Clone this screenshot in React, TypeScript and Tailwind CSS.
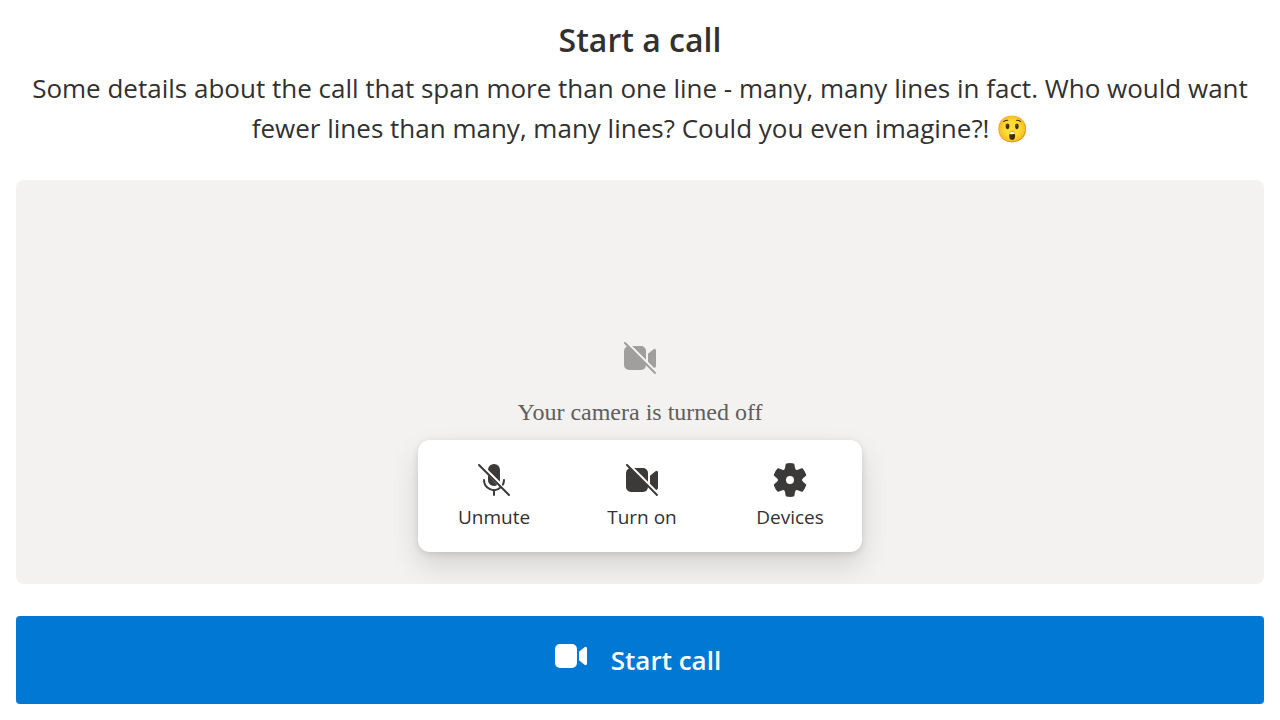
import type { ReactNode } from 'react';

function Icon({ className, children }: { className: string; children: ReactNode }) {
  return (
    <svg viewBox="0 0 20 20" fill="currentColor" aria-hidden="true" className={className}>
      {children}
    </svg>
  );
}

function VideoIcon({ className }: { className: string }) {
  return (
    <Icon className={className}>
      <path d="M13 6.5A2.5 2.5 0 0 0 10.5 4h-6A2.5 2.5 0 0 0 2 6.5v7A2.5 2.5 0 0 0 4.5 16h6a2.5 2.5 0 0 0 2.5-2.5v-7Zm1 1.43v4.15l2.76 2.35a.75.75 0 0 0 1.24-.57V6.14a.75.75 0 0 0-1.24-.57L14 7.93Z" />
    </Icon>
  );
}

function VideoOffIcon({ className }: { className: string }) {
  return (
    <Icon className={className}>
      <path d="M2.85 2.15a.5.5 0 1 0-.7.7l1.27 1.4A2.5 2.5 0 0 0 2 6.5v7A2.5 2.5 0 0 0 4.5 16h6a2.5 2.5 0 0 0 2.45-2.34l4.2 4.2a.5.5 0 0 0 .7-.71l-15-15Z" />
      <path d="M13 6.5v4.38L6.12 4h4.38A2.5 2.5 0 0 1 13 6.5Z" />
      <path d="M14 7.93v3.95l3.1 3.1c.5.0.9-.5.9-1.12V6.14a.75.75 0 0 0-1.24-.57L14 7.93Z" />
    </Icon>
  );
}

function MicOffIcon({ className }: { className: string }) {
  return (
    <Icon className={className}>
      <path d="M7 7.5V10a3 3 0 0 0 4.6 2.54L7 7.5Z" />
      <path d="M13 10V5a3 3 0 0 0-6-.12l5.88 5.88c.08-.25.12-.5.12-.76Z" />
      <path
        d="M2.5 2.5l15 15M5 10a5 5 0 0 0 8.4 3.67M15 10a5 5 0 0 1-.55 2.3M10 15v2.5"
        fill="none"
        stroke="currentColor"
        strokeLinecap="round"
      />
    </Icon>
  );
}

function SettingsIcon({ className }: { className: string }) {
  return (
    <Icon className={className}>
      <path d="M1.91 7.38A8.5 8.5 0 0 1 3.7 4.3a.5.5 0 0 1 .54-.13l1.92.68a1 1 0 0 0 1.32-.76l.36-2a.5.5 0 0 1 .4-.4 8.53 8.53 0 0 1 3.55 0c.2.04.35.2.38.4l.37 2a1 1 0 0 0 1.32.76l1.92-.68a.5.5 0 0 1 .54.13 8.5 8.5 0 0 1 1.78 3.08.5.5 0 0 1-.15.54l-1.56 1.32a1 1 0 0 0 0 1.52l1.56 1.32a.5.5 0 0 1 .15.54 8.5 8.5 0 0 1-1.78 3.08.5.5 0 0 1-.54.13l-1.92-.68a1 1 0 0 0-1.32.76l-.37 2a.5.5 0 0 1-.38.4 8.53 8.53 0 0 1-3.56 0 .5.5 0 0 1-.39-.4l-.36-2a1 1 0 0 0-1.32-.76l-1.92.68a.5.5 0 0 1-.54-.13 8.5 8.5 0 0 1-1.78-3.08.5.5 0 0 1 .15-.54l1.56-1.32a1 1 0 0 0 0-1.52L2.06 7.92a.5.5 0 0 1-.15-.54ZM8 10a2 2 0 1 0 4 0 2 2 0 0 0-4 0Z" />
    </Icon>
  );
}

const controls = [
  { label: 'Unmute', Glyph: MicOffIcon },
  { label: 'Turn on', Glyph: VideoOffIcon },
  { label: 'Devices', Glyph: SettingsIcon },
];

export default function App() {
  return (
    <main className="flex min-h-screen flex-col bg-white p-4 font-['Segoe_UI','Open_Sans',sans-serif] text-[#323130]">
      <header className="text-center">
        <h1 className="text-[32px] leading-12 font-semibold">Start a call</h1>
        <p className="mt-1 text-[26px] leading-10">
          Some details about the call that span more than one line - many, many lines in fact. Who would want fewer
          lines than many, many lines? Could you even imagine?! 😲
        </p>
      </header>

      <section
        aria-label="Camera preview"
        className="mt-8 flex flex-1 flex-col items-center justify-end overflow-hidden rounded-lg bg-[#f3f2f1] pt-8 pb-8"
      >
        <VideoOffIcon className="size-10 text-[#a19f9d]" />
        <p className="mt-4 font-['Liberation_Serif',serif] text-2xl leading-9 text-[#605e5c]">
          Your camera is turned off
        </p>
        <div className="mt-2.5 flex rounded-xl bg-white shadow-[0_13px_29px_rgba(0,0,0,0.132),0_2px_7px_rgba(0,0,0,0.108)]">
          {controls.map(({ label, Glyph }) => (
            <button key={label} type="button" className="flex h-28 w-37 flex-col items-center pt-5 pl-1 text-[#3b3a39]">
              <Glyph className="size-10" />
              <span className="mt-1 text-[19px] leading-[26px] text-[#323130]">{label}</span>
            </button>
          ))}
        </div>
      </section>

      <button
        type="button"
        className="mt-8 flex h-22 items-center justify-center gap-5 rounded bg-[#0078d4] pr-2 text-[26px] font-semibold text-white"
      >
        <VideoIcon className="mb-2 size-10" />
        Start call
      </button>
    </main>
  );
}
